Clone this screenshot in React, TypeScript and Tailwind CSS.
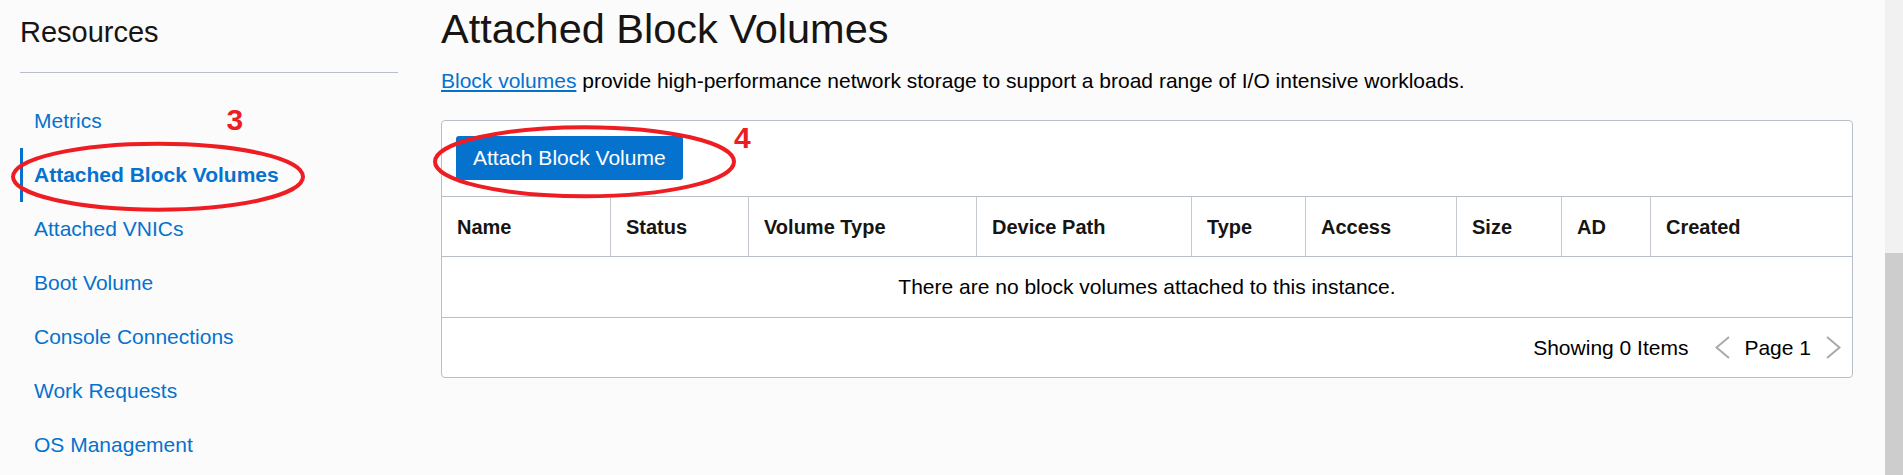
import React from 'react';

const menu = [
  'Metrics',
  'Attached Block Volumes',
  'Attached VNICs',
  'Boot Volume',
  'Console Connections',
  'Work Requests',
  'OS Management',
];

const columns = [
  { label: 'Name', w: 'w-[168px]' },
  { label: 'Status', w: 'w-[138px]' },
  { label: 'Volume Type', w: 'w-[228px]' },
  { label: 'Device Path', w: 'w-[215px]' },
  { label: 'Type', w: 'w-[114px]' },
  { label: 'Access', w: 'w-[151px]' },
  { label: 'Size', w: 'w-[105px]' },
  { label: 'AD', w: 'w-[89px]' },
  { label: 'Created', w: 'flex-1' },
];

const Chevron: React.FC<{ dir: 'left' | 'right' }> = ({ dir }) => (
  <svg width="15" height="23" viewBox="0 0 15 23" className="shrink-0">
    <polyline
      points={dir === 'left' ? '14,1 1.5,11.5 14,22' : '1,1 13.5,11.5 1,22'}
      fill="none"
      stroke="#a9a9a9"
      strokeWidth="2"
    />
  </svg>
);

const App: React.FC = () => {
  return (
    <div className="relative flex h-[475px] w-full overflow-hidden bg-[#fbfbfb] font-['Liberation_Sans',Arial,sans-serif] text-[#161513]">
      <div className="flex flex-1">
        {/* sidebar */}
        <aside className="w-[398px] shrink-0 pl-[20px]">
          <h2 className="pt-[14px] text-[29px] leading-[36px] text-[#161513]">Resources</h2>
          <div className="mt-[22px] h-px bg-[#b9bfc8]" />
          <ul className="mt-[21px]">
            {menu.map((item, i) => (
              <li
                key={item}
                className={
                  i === 1
                    ? 'flex h-[54px] items-center border-l-[3px] border-[#0572ce] pl-[11px] text-[21px] font-bold text-[#0572ce]'
                    : 'flex h-[54px] items-center pl-[14px] text-[21px] text-[#0572ce]'
                }
              >
                {item}
              </li>
            ))}
          </ul>
        </aside>

        {/* main */}
        <main className="ml-[43px] w-[1412px] shrink-0">
          <h1 className="pt-[5px] text-[41.5px] leading-[48px] text-[#161513]">Attached Block Volumes</h1>
          <p className="mt-[16px] text-[21px] leading-[24px] text-black">
            <span className="text-[#0572ce] underline decoration-[1.5px] underline-offset-[2px]">Block volumes</span> provide
            high-performance network storage to support a broad range of I/O intensive workloads.
          </p>

          <div className="mt-[27px] rounded-[4px] border border-[#b9bfc8] bg-white">
            <div className="border-b border-[#b9bfc8] px-[14px] pt-[15px] pb-[16px]">
              <button className="h-[44px] rounded-[3px] bg-[#0572ce] px-[17px] text-[21px] text-white">
                Attach Block Volume
              </button>
            </div>

            <div className="flex h-[60px] border-b border-[#b9bfc8]">
              {columns.map((c, i) => (
                <div
                  key={c.label}
                  className={`${c.w} flex items-center pl-[15px] text-[20px] font-bold text-[#161513] ${
                    i > 0 ? 'border-l border-[#c4c9d0]' : ''
                  }`}
                >
                  {c.label}
                </div>
              ))}
            </div>

            <div className="flex h-[61px] items-center justify-center border-b border-[#b9bfc8] text-[21px] text-black">
              There are no block volumes attached to this instance.
            </div>

            <div className="flex h-[59px] items-center justify-end pr-[11px] text-[21px] text-black">
              <span>Showing 0 Items</span>
              <span className="ml-[27px]">
                <Chevron dir="left" />
              </span>
              <span className="ml-[14px]">Page 1</span>
              <span className="ml-[15px]">
                <Chevron dir="right" />
              </span>
            </div>
          </div>
        </main>
      </div>

      {/* scrollbar */}
      <div className="flex w-[18px] shrink-0 flex-col bg-[#f1f1f1]">
        <div className="h-[253px]" />
        <div className="flex-1 bg-[#cdcdcd]" />
      </div>

      {/* red annotations */}
      <svg className="pointer-events-none absolute left-0 top-0" width="1903" height="475">
        <ellipse cx="158" cy="176.7" rx="145" ry="33" fill="none" stroke="#ee1d23" strokeWidth="4" />
        <ellipse cx="584.5" cy="161.7" rx="149.5" ry="34.5" fill="none" stroke="#ee1d23" strokeWidth="4" />
      </svg>
      <span className="absolute left-[226.5px] top-[105px] text-[30px] font-bold leading-[30px] text-[#ee1d23]">3</span>
      <span className="absolute left-[734px] top-[123px] text-[30px] font-bold leading-[30px] text-[#ee1d23]">4</span>
    </div>
  );
};

export default App;
